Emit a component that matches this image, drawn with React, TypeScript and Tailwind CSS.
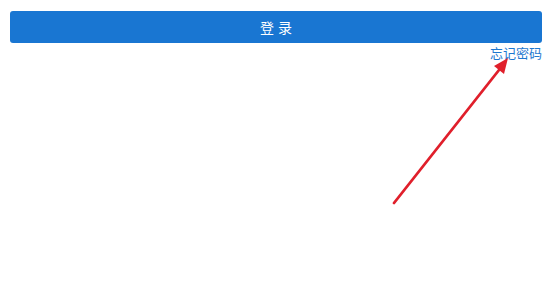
import React from "react";

export default function App() {
  return (
    <div className="relative w-[556px] h-[304px] bg-white" style={{ fontFamily: '"Noto Sans CJK SC", "Noto Sans", sans-serif' }}>
      <div className="pt-[11px] px-[10px] pr-[14px]">
        <button className="w-full h-[32px] rounded-[3px] bg-[#1976d2] text-white text-[14px] leading-none tracking-[4px] flex items-center justify-center">
          <span className="pl-[4px]">登录</span>
        </button>
        <div className="flex justify-end pt-[1px]">
          <span className="text-[13px] leading-[18px] text-[#1e78cf]">忘记密码</span>
        </div>
      </div>
      <svg className="absolute left-0 top-0 pointer-events-none" width="556" height="304" viewBox="0 0 556 304">
        <line x1="394" y1="203" x2="499" y2="70" stroke="#e01f2b" strokeWidth="2.8" strokeLinecap="round" />
        <polygon points="508,58 494,66 504,74" fill="#e01f2b" />
      </svg>
    </div>
  );
}
